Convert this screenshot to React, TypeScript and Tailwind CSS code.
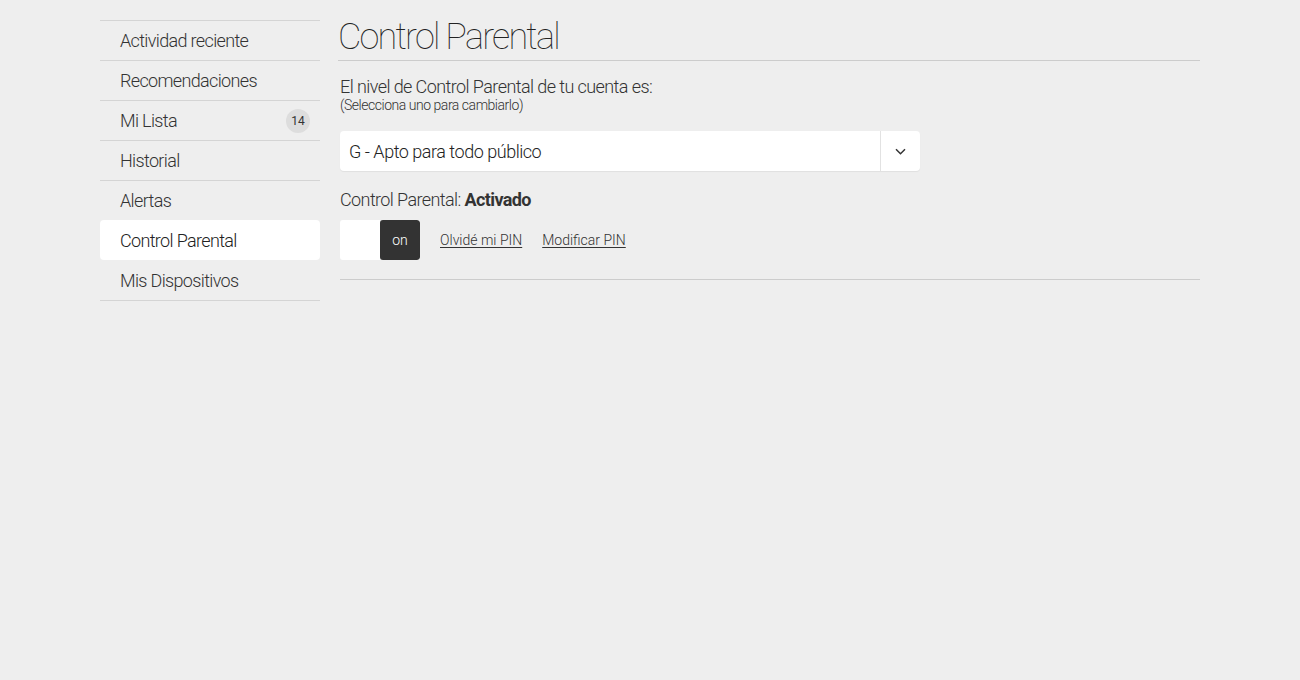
const menu = [
  { label: "Actividad reciente" },
  { label: "Recomendaciones" },
  { label: "Mi Lista", badge: 14 },
  { label: "Historial" },
  { label: "Alertas" },
  { label: "Control Parental", active: true },
  { label: "Mis Dispositivos", afterActive: true },
]

const App = () => {
  return (
    <div className="min-h-[680px] bg-[#eeeeee] text-[#333333]" style={{ fontFamily: "Roboto, 'Noto Sans', sans-serif" }}>
      <div className="flex gap-5 px-[100px] pt-[19px]">
        {/* sidebar */}
        <ul className="mt-px w-[220px] shrink-0 border-b border-[#d4d4d4]">
          {menu.map((item) =>
            item.active ? (
              <li key={item.label} className="flex h-10 items-center rounded bg-white px-5 text-[18px] font-light tracking-[-0.65px] text-[#222]">
                {item.label}
              </li>
            ) : (
              <li
                key={item.label}
                className={`flex h-10 items-center justify-between px-5 pr-[10px] text-[18px] font-light tracking-[-0.65px] text-[#333] ${item.afterActive ? "" : "border-t border-[#d4d4d4]"}`}
              >
                <span>{item.label}</span>
                {item.badge && (
                  <span className="flex h-6 w-6 items-center justify-center rounded-full bg-[#dddddd] text-[12px] font-normal tracking-normal text-[#333]">
                    {item.badge}
                  </span>
                )}
              </li>
            )
          )}
        </ul>

        {/* content */}
        <div className="flex-1">
          <h1 className="-ml-[2px] border-b border-[#cccccc] pb-[5px] text-[36px] font-thin leading-[36px] tracking-[-1.8px] text-[#222]">
            Control Parental
          </h1>
          <p className="mt-4 text-[18px] font-light leading-5 tracking-[-0.58px]">El nivel de Control Parental de tu cuenta es:</p>
          <p className="text-[14px] font-light leading-4 tracking-[-0.47px]">(Selecciona uno para cambiarlo)</p>

          <div className="mt-[18px] flex h-10 w-[580px] items-center rounded bg-white shadow-[0_1px_1px_rgba(0,0,0,0.06)]">
            <span className="flex-1 pl-[9px] text-[18px] font-light tracking-[-0.47px] text-[#222]">G - Apto para todo público</span>
            <span className="flex h-10 w-10 items-center justify-center border-l border-[#e2e2e2]">
              <svg width="11" height="7" viewBox="0 0 11 7" fill="none" stroke="#333" strokeWidth="1.5">
                <path d="M1 1.2l4.5 4.5 4.5-4.5" />
              </svg>
            </span>
          </div>

          <p className="mt-[17px] text-[18px] font-light leading-6 tracking-[-0.6px]">
            Control Parental: <span className="font-bold">Activado</span>
          </p>

          <div className="mt-[8px] flex items-center gap-5 border-b border-[#cccccc] pb-[19px]">
            <div className="flex h-10 w-20 overflow-hidden rounded-[3px]">
              <span className="w-10 bg-white" />
              <span className="flex w-10 items-center justify-center rounded-[3px] bg-[#333333] text-[14px] font-light text-white">on</span>
            </div>
            <a className="text-[14px] font-light text-[#333] underline underline-offset-2">Olvidé mi PIN</a>
            <a className="text-[14px] font-light text-[#333] underline underline-offset-2">Modificar PIN</a>
          </div>
        </div>
      </div>
    </div>
  )
}

export default App
